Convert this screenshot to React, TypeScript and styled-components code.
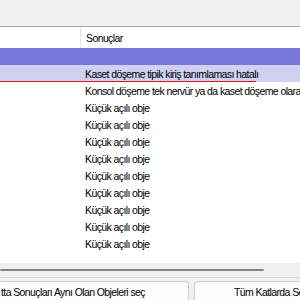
import styled, { createGlobalStyle } from 'styled-components';

const GlobalStyle = createGlobalStyle`
  html, body {
    margin: 0;
    padding: 0;
    background: #f0f0f0;
  }
  * {
    box-sizing: border-box;
  }
`;

type RowKind = 'selected' | 'hover' | 'plain';

interface ResultRow {
  text: string;
  kind: RowKind;
}

const rows: ResultRow[] = [
  { text: '', kind: 'selected' },
  { text: 'Kaset döşeme tipik kiriş tanımlaması hatalı', kind: 'hover' },
  { text: 'Konsol döşeme tek nervür ya da kaset döşeme olarak tanımlanmalı', kind: 'plain' },
  ...Array.from({ length: 9 }, () => ({ text: 'Küçük açılı obje', kind: 'plain' as RowKind })),
];

const rowColors: Record<RowKind, string> = {
  selected: '#7876d9',
  hover: '#d0d0f0',
  plain: '#ffffff',
};

export default function App() {
  return (
    <>
      <GlobalStyle />
      <Window>
        <TopPanel />
        <ListView>
          <HeaderRow>
            <FirstColumn />
            <HeaderCell>Sonuçlar</HeaderCell>
          </HeaderRow>
          <Rows>
            {rows.map((row, i) => (
              <Row key={i} bg={rowColors[row.kind]}>
                <FirstColumn />
                <Cell>{row.text}</Cell>
                {row.kind === 'hover' && <ErrorLine />}
              </Row>
            ))}
          </Rows>
        </ListView>
        <ScrollTrack>
          <ScrollThumb />
        </ScrollTrack>
        <ButtonBar>
          <ActionButton width={191} pad={2}>
            tta Sonuçları Aynı Olan Objeleri seç
          </ActionButton>
          <ActionButton width={120} pad={39}>
            Tüm Katlarda Sonuçları Aynı Olan Objeleri seç
          </ActionButton>
        </ButtonBar>
      </Window>
    </>
  );
}

const Window = styled.div`
  width: 300px;
  height: 300px;
  overflow: hidden;
  display: flex;
  flex-direction: column;
  font-family: 'Liberation Sans', Arial, sans-serif;
  font-size: 10.5px;
  letter-spacing: -0.6px;
  color: #000;
  background: #f0f0f0;
`;

const TopPanel = styled.div`
  height: 27px;
  flex-shrink: 0;
  background: #f0f0f0;
  border-bottom: 1px solid #a9a9a9;
`;

const ListView = styled.div`
  flex: 1;
  background: #fff;
  display: flex;
  flex-direction: column;
  overflow: hidden;
`;

const HeaderRow = styled.div`
  height: 21px;
  flex-shrink: 0;
  display: flex;
  align-items: stretch;
  background: #fff;
`;

const FirstColumn = styled.div`
  width: 80px;
  flex-shrink: 0;
`;

const HeaderCell = styled.div`
  flex: 1;
  display: flex;
  align-items: center;
  padding-left: 5px;
  border-left: 1px solid #e5e5e5;
  white-space: nowrap;
`;

const Rows = styled.div`
  display: flex;
  flex-direction: column;
`;

const Row = styled.div<{ bg: string }>`
  position: relative;
  height: 17px;
  flex-shrink: 0;
  display: flex;
  align-items: center;
  background: ${({ bg }) => bg};
`;

const Cell = styled.div`
  padding-left: 5px;
  white-space: nowrap;
`;

const ErrorLine = styled.div`
  position: absolute;
  left: 0;
  bottom: -1px;
  width: 256px;
  height: 2px;
  background: #e3111b;
`;

const ScrollTrack = styled.div`
  height: 15px;
  flex-shrink: 0;
  background: #f0f0f0;
  border-bottom: 1px solid #d6d6d6;
  display: flex;
  align-items: center;
`;

const ScrollThumb = styled.div`
  width: 264px;
  height: 2px;
  border-radius: 1px;
  background: #858585;
`;

const ButtonBar = styled.div`
  height: 22px;
  flex-shrink: 0;
  display: flex;
  gap: 5px;
  padding-top: 3px;
  margin-left: -2px;
`;

const ActionButton = styled.div<{ width: number; pad: number }>`
  width: ${({ width }) => width}px;
  flex-shrink: 0;
  height: 21px;
  display: flex;
  align-items: center;
  padding-left: ${({ pad }) => pad}px;
  background: #fdfdfd;
  border: 1px solid #d0d0d0;
  border-bottom-color: #c0c0c0;
  border-radius: 4px;
  white-space: nowrap;
  overflow: hidden;
`;
